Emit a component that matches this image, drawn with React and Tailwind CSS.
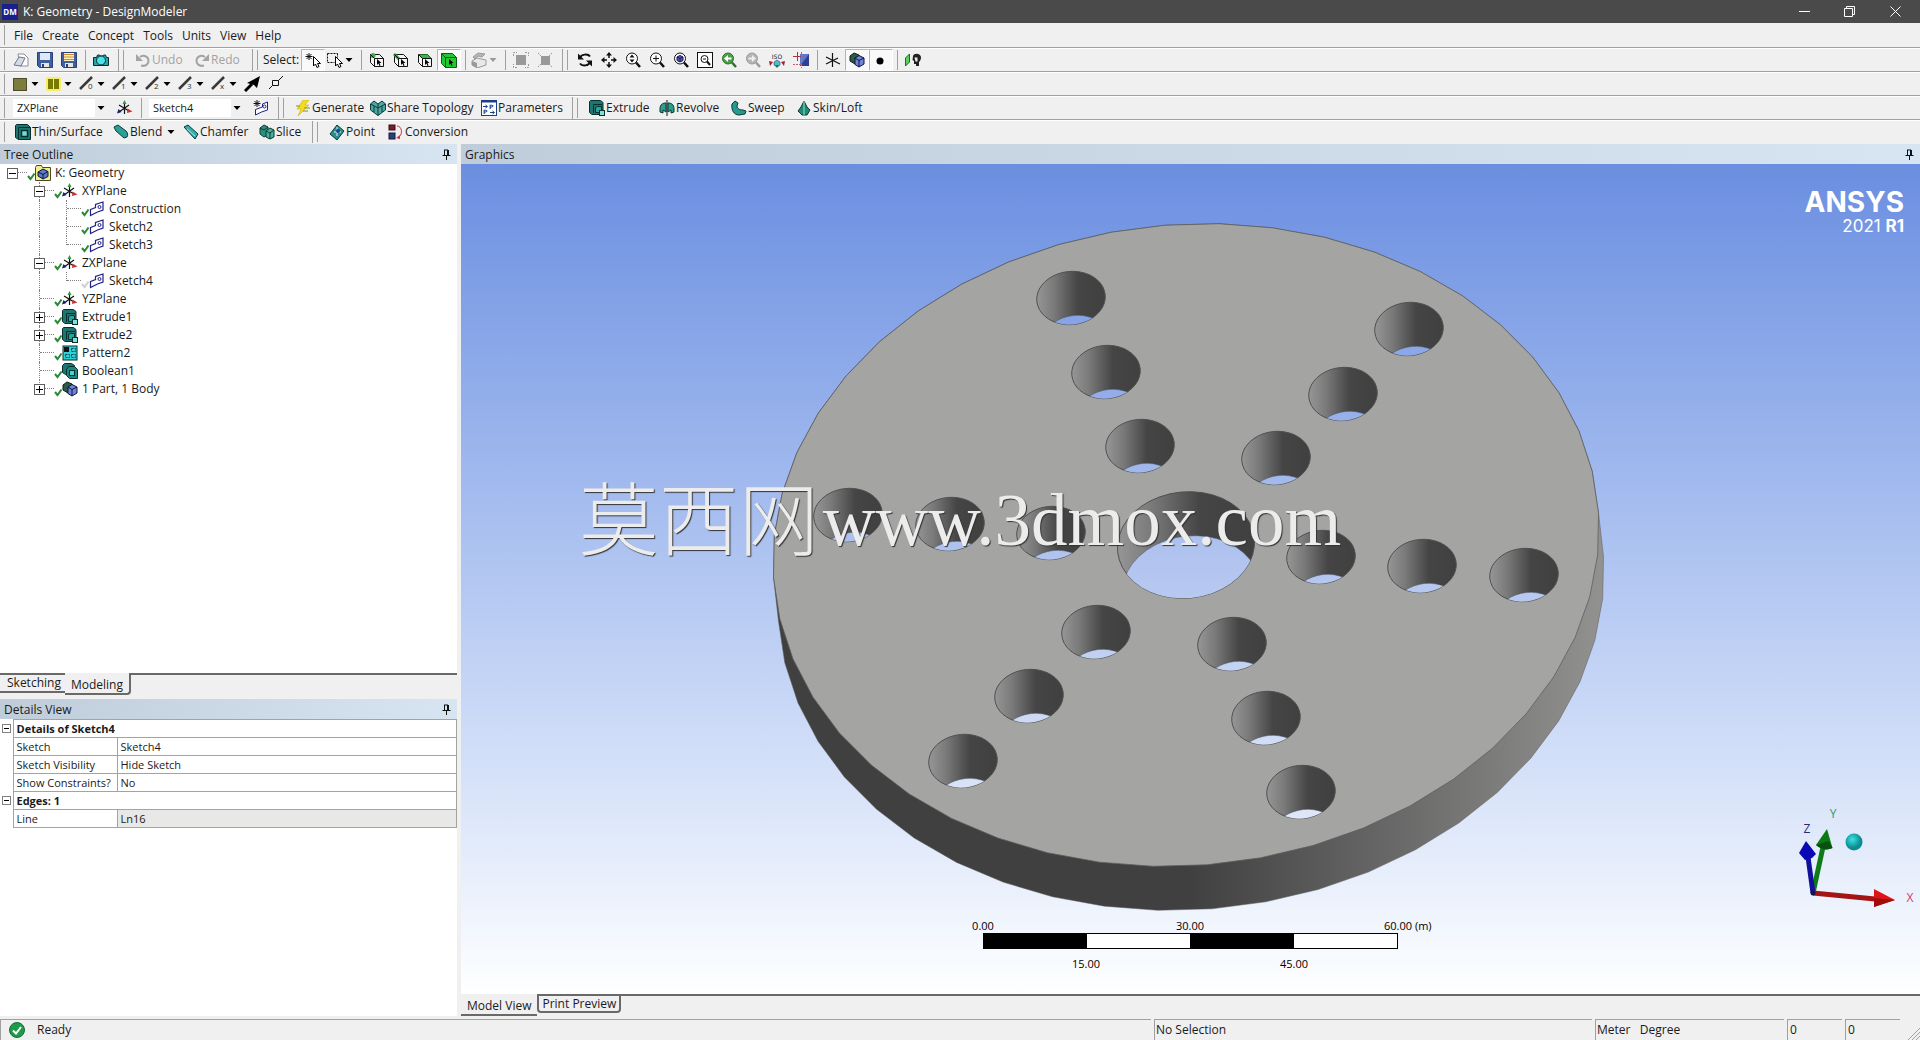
import React, { useState } from "react";

/* ---------- icons ---------- */

const Svg = ({ children, w = 16, h = 16, className = "" }) => (
  <svg
    width={w}
    height={h}
    viewBox={`0 0 ${w} ${h}`}
    className={`shrink-0 ${className}`}
    fill="none"
    stroke="none"
    aria-hidden="true"
  >
    {children}
  </svg>
);

const Caret = ({ color = "#000" }) => (
  <Svg w={8} h={8}>
    <path d="M0.5 2h7L4 6z" fill={color} />
  </Svg>
);

const Cursor = () => (
  <path d="M8.500 4.500v9.500l2-2 1.500 3.500 2-1-1.500-3h3z" fill="#fff" stroke="#000" />
);

const Cube = ({ children }) => (
  <>
    <path d="M1.500 2.500h9l4 4v8h-9l-4-4z" fill="#f4f4f4" stroke="#111" />
    {children}
    <path d="M1.500 2.500l4 4h9M5.500 6.500v8" stroke="#111" />
    <path d="M8 7v6l1.500-1.500 1 2.500 1-.5-1-2.500h2z" fill="#000" />
  </>
);

const Lens = ({ color = "#111", fill = "#fff", children }) => (
  <>
    <circle cx="7" cy="6.500" r="5.500" fill={fill} stroke={color} />
    <path d="M11 10.500l4 4.500" stroke={color} strokeWidth="2.500" />
    {children}
  </>
);

const Axes = () => (
  <>
    <path d="M7.500 3v11M2 5l10 6M2 12l10-7" stroke="#111" strokeWidth="1.200" />
    <path d="M5.500 4L7.500 0l2 4z" fill="#2e9a3e" />
    <path d="M10.500 8.500l5 3-5.500 1.500z" fill="#c83232" />
    <path d="M0 13.500l1.500-4.500 3 3z" fill="#15157a" />
  </>
);

const SketchShape = () => (
  <>
    <path
      d="M1.500 8.500l5-2V3.500l7.500-2.500v8l-5.500 2-7 3.500z"
      fill="#fff"
      stroke="#20208c"
      strokeWidth="1.200"
    />
    <circle cx="10.500" cy="6" r="1.500" stroke="#20208c" />
  </>
);

const Body = () => (
  <>
    <path d="M1 4l4-3 5 2v6l-4 3-5-3z" fill="#2d5a46" stroke="#0c1c18" />
    <path d="M6 6l4-2.500L15 6v6l-5 3-4-2.500z" fill="#6f86d8" stroke="#0d1440" />
    <path d="M6 6l4 2.500L15 6M10 8.500V15" stroke="#0d1440" />
  </>
);

const ExtrudeShape = () => (
  <>
    <path d="M.5 1.500l1-1h10l2.500 2v12h-11l-2.500-2z" fill="#1c7571" stroke="#06302e" />
    <path d="M4.500 13V4.500H13" stroke="#06302e" />
    <path d="M6.500 7.500l2-1h4v6h-6z" fill="#27a39c" stroke="#06302e" />
    <rect x="10.500" y="10.500" width="5" height="5" fill="#7fe0da" stroke="#06302e" />
  </>
);

const icons = {
  open: (
    <>
      <path d="M5 2h6l4 4v8H7z" fill="#fff" stroke="#8a8f9a" />
      <path d="M1 13l5-8 6 1-4 8z" fill="#d3dae8" stroke="#6d7686" />
    </>
  ),
  save: (
    <>
      <path d="M.5.5h15v15h-13l-2-2z" fill="#3f5f9f" stroke="#2a3f73" />
      <rect x="3" y="1" width="10" height="7" fill="#dfe8f6" />
      <rect x="4" y="11" width="8" height="4" fill="#e6e6e6" />
      <rect x="5" y="12" width="2" height="3" fill="#2a3f73" />
    </>
  ),
  saveAs: (
    <>
      <path d="M.5.5h15v15h-13l-2-2z" fill="#3f5f9f" stroke="#2a3f73" />
      <rect x="3" y="1" width="10" height="8" fill="#fff0c0" />
      <path d="M3 2.500h10M3 5h10M3 7.500h10" stroke="#d08a2a" />
      <rect x="4" y="11" width="8" height="4" fill="#e6e6e6" />
      <rect x="5" y="12" width="2" height="3" fill="#2a3f73" />
    </>
  ),
  camera: (
    <>
      <path d="M.5 5.500h3l1-2.500h2l1 1h2l1-1h2l1 2.500h2v8h-15z" fill="#2aa3a8" stroke="#0c2a2c" />
      <circle cx="8" cy="8.500" r="4.500" fill="#49e3ea" stroke="#0c2a2c" />
    </>
  ),
  undo: (
    <>
      <path d="M6 13.500c5 1.500 8-2 7.500-5.500S9 2.500 5 5" stroke="#a3a3a3" strokeWidth="2" />
      <path d="M1 2v7h7z" fill="#a3a3a3" />
    </>
  ),
  redo: (
    <>
      <path d="M10 13.500c-5 1.500-8-2-7.500-5.500S7 2.500 11 5" stroke="#a3a3a3" strokeWidth="2" />
      <path d="M15 2v7H8z" fill="#a3a3a3" />
    </>
  ),
  pick: (
    <>
      <path d="M4 1v7M.5 4.500h7M1.500 2l5 5M6.500 2l-5 5" stroke="#111" />
      <Cursor />
    </>
  ),
  boxPick: (
    <>
      <path d="M.5 1.500h10M.5 1.500v9h7M10.500 1.500v4" stroke="#111" strokeDasharray="2 1" />
      <Cursor />
    </>
  ),
  point: (
    <Cube>
      <circle cx="4" cy="3.500" r="2.500" fill="#3fae4a" />
    </Cube>
  ),
  edge: (
    <Cube>
      <path d="M1 2l5 5" stroke="#2f9a3a" strokeWidth="3" />
    </Cube>
  ),
  face: (
    <Cube>
      <path d="M1.500 2.500h9l4 4h-9z" fill="#35b845" />
    </Cube>
  ),
  body: (
    <>
      <path d="M.5 1.500h11l4 4v10h-11l-4-4z" fill="#22c832" stroke="#0c5a14" />
      <path d="M.5 1.500l4 4h11M4.500 5.500v10" stroke="#0c5a14" />
      <path d="M8 7v6l1.500-1.500 1 2.500 1-.5-1-2.500h2z" fill="#000" />
    </>
  ),
  extend: (
    <>
      <path d="M1 9l5-3 9 2v5l-9 3-5-3z" fill="#e8e8e8" stroke="#999" />
      <path d="M1 9l5 2v5l-5-3z" fill="#999" />
      <path d="M2 5l5-4 7 1-3 3-4-1-3 3z" fill="#b5b5b5" stroke="#999" />
    </>
  ),
  expand: (
    <>
      <rect x="3" y="3" width="10" height="10" fill="#999" />
      <path d="M.5 4V.5H4M12 .5h3.500V4M15.500 12v3.500H12M4 15.500H.5V12" stroke="#999" strokeDasharray="2 1" />
    </>
  ),
  shrink: (
    <>
      <rect x="4" y="4" width="9" height="9" fill="#999" />
      <path d="M1 1l3 3M15 1l-3 3M15 15l-3-3M1 15l3-3" stroke="#999" strokeDasharray="2 1" />
    </>
  ),
  rotate: (
    <>
      <path d="M3 6c1-4 8-4.500 10-1.500M13 10c-1 4-8 4.500-10 1.500" stroke="#111" strokeWidth="2" />
      <path d="M1 1.500v6h6zM15 14.500v-6H9z" fill="#111" />
    </>
  ),
  pan: (
    <>
      <path d="M8 2v4M8 10v4M2 8h4M10 8h4" stroke="#111" strokeWidth="1.500" />
      <path d="M8 0l3 3.500H5zM8 16l3-3.500H5zM0 8l3.500-3v6zM16 8l-3.500-3v6z" fill="#111" />
    </>
  ),
  zoom: (
    <Lens>
      <path d="M7 2.500l2.500 3h-5zM7 10.500l2.500-3h-5z" fill="#111" />
    </Lens>
  ),
  zoomIn: (
    <Lens>
      <path d="M7 3.500v6M4 6.500h6" stroke="#111" />
    </Lens>
  ),
  zoomFit: (
    <Lens>
      <path d="M4 5l3-1.500L10 5v3.500L7 10 4 8.500z" fill="#5a5ab0" stroke="#16165e" />
      <path d="M4 5l3 1.500L10 5M7 6.500V10" stroke="#16165e" />
    </Lens>
  ),
  zoomBox: (
    <>
      <rect x=".5" y=".5" width="15" height="15" fill="#fff" stroke="#111" />
      <circle cx="7.500" cy="7" r="3.500" stroke="#111" />
      <path d="M10 9.500l3 3.500" stroke="#111" strokeWidth="2" />
      <path d="M6 7h3" stroke="#111" />
    </>
  ),
  zoomPrev: (
    <Lens color="#2f6f2f" fill="#4c9e48">
      <path d="M3 6.500l4-3.500v2.500h3.500v2H7V10z" fill="#fff" />
    </Lens>
  ),
  zoomNext: (
    <Lens color="#9a9a9a" fill="#b5b5b5">
      <path d="M11 6.500L7 3v2.500H3.500v2H7V10z" fill="#eee" />
    </Lens>
  ),
  iso: (
    <>
      <text x="8" y="7" textAnchor="middle" fontSize="6" fontFamily="DejaVu Sans" fill="#111">
        ISO
      </text>
      <path d="M5 10l3-2 3 2v3l-3 2-3-2z" fill="#49c0c8" stroke="#126" strokeWidth=".5" />
      <path d="M0 9l4 1-3 4zM12 10l4-1-1 5z" fill="#a02030" />
      <path d="M6 13h4l-2 3z" fill="#1d7a2d" />
    </>
  ),
  displayPlane: (
    <>
      <rect x="7" y="2" width="9" height="12" fill="#5f78c8" />
      <path d="M7 14l9-12v12z" fill="#2f3f98" />
      <path d="M4.500 0v9M0 4.500h9" stroke="#b03040" />
      <path d="M8.500 0v16M0 12.500h8" stroke="#c86070" strokeDasharray="2 1" />
    </>
  ),
  axes: <path d="M7.500 1v14M1 5l14 7M1 12l12-6" stroke="#111" strokeWidth="1.200" />,
  shaded: <Body />,
  dot: <circle cx="7" cy="9" r="3.500" fill="#000" />,
  lookAt: (
    <>
      <path d="M.5 6l4-4v8l-4 4z" fill="#5cd05c" stroke="#1d6a1d" />
      <path d="M8 4c1-3 7-3 8 1 0 3-1 4-2 5v4h-3v-2H9v-3L7.500 8z" fill="#222" />
      <path d="M9.500 5.500h3v4h-2z" fill="#eee" />
    </>
  ),
  olive: <rect x=".5" y="2.500" width="13" height="12" fill="#7c7c3c" stroke="#4c4c28" />,
  oliveHi: (
    <>
      <rect x="0" y="1" width="15" height="14" rx="2" fill="#f3ee6a" />
      <path d="M2 3h5v10H2zM8 3h5v10H8z" fill="#7a7a00" />
    </>
  ),
  arrow: (
    <>
      <path d="M1 15l7-7" stroke="#000" strokeWidth="3" />
      <path d="M16 0l-3 12-3-3-7-2z" fill="#000" />
    </>
  ),
  pointLine: (
    <>
      <path d="M4.500 4.500h6v5h-6z" stroke="#111" />
      <path d="M10.500 4.500L15 0M4.500 9.500L1 13" stroke="#111" />
    </>
  ),
  plane: <Axes />,
  newSketch: (
    <>
      <path d="M2.500 9.500v5.500l6-3 6-2V2l-5 2v3z" fill="#fff" stroke="#20208c" />
      <path d="M4 0v7M.5 3.500h7M1.500 1l5 5M6.500 1l-5 5" stroke="#111" />
      <circle cx="11.500" cy="6.500" r="1.500" stroke="#20208c" />
    </>
  ),
  generate: (
    <>
      <path d="M8 0h6l-4 5h4L3 16l3-7H2z" fill="#f2dc22" stroke="#c2a800" strokeWidth=".5" />
      <path d="M9 8h6M8 11h5M1 6h4" stroke="#8a8a20" />
    </>
  ),
  share: (
    <>
      <path d="M.5 4l3.500-3 4 3 4-3 3.500 3v6L8 15.500.5 10z" fill="#4da8a4" stroke="#0b3a38" />
      <path d="M.5 4L8 8l7.500-4M8 4v11.500M4 6v6M12 6v6" stroke="#0b3a38" />
    </>
  ),
  params: (
    <>
      <rect x=".5" y=".5" width="15" height="15" fill="#fff" stroke="#1c3f86" />
      <path d="M0 1.500h16" stroke="#1c3f86" strokeWidth="2" />
      <text x="8" y="9" fontSize="6" fontWeight="bold" fontFamily="DejaVu Sans" fill="#1c3f86">
        P
      </text>
      <text x="2" y="14" fontSize="6" fontWeight="bold" fontFamily="DejaVu Sans" fill="#1c3f86">
        P
      </text>
      <path d="M2 6.500h4M4.500 5l2 1.500-2 1.500M9 12.500h4M11.500 11l2 1.500-2 1.500" stroke="#1c3f86" />
    </>
  ),
  extrude: <ExtrudeShape />,
  revolve: (
    <>
      <path d="M1 9c0-5 3-6 6-6v9l-3-2v3l-3-1zM15 9c0-5-3-6-6-6v9l3-2v3l3-1z" fill="#27a08f" stroke="#0b3a30" />
      <path d="M8 0v16" stroke="#111" />
    </>
  ),
  sweep: (
    <path d="M1 4l3-3 3 2-1 3c0 3 3 4 6 4l3 1-1 3-6 1C3 15 0 10 1 4z" fill="#27998f" stroke="#0b3a36" />
  ),
  loft: (
    <>
      <path d="M8 1l3 6 3 3-3 5H6l-4-4 3-4z" fill="#1f8a74" stroke="#0b3a30" />
      <path d="M8 1v14" stroke="#8fe0c8" />
    </>
  ),
  thin: (
    <>
      <path d="M.5 1.500l1-1h11l3 3v12h-12l-3-2z" fill="#1c7571" stroke="#06302e" />
      <path d="M3.500 15.500v-12h12" stroke="#06302e" />
      <rect x="6.500" y="6.500" width="6" height="6" fill="#7fd6d2" stroke="#06302e" strokeWidth="1.500" />
    </>
  ),
  blend: (
    <path d="M1 3l4-2 8 6c2 2 2 4 1 6l-3 1-8-7z" fill="#2a9f98" stroke="#0b3a38" />
  ),
  chamfer: (
    <>
      <path d="M1 3l4-2 10 9-3 5z" fill="#35aea6" stroke="#0b3a38" />
      <path d="M4 5l8 7" stroke="#bdf" />
    </>
  ),
  slice: (
    <>
      <path d="M1 4l4-3 4 2v8l-4 2-4-3z" fill="#2a8f80" stroke="#0b3a30" />
      <path d="M7 7l4-3 4 2v7l-4 2-4-2z" fill="#45b09e" stroke="#0b3a30" />
      <path d="M7 7l4 2 4-3M11 9v6M1 4l4 2 4-3" stroke="#0b3a30" />
    </>
  ),
  pointF: (
    <>
      <path d="M1 10L8 1l7 6-7 9z" fill="#2a8f8a" stroke="#0b3a38" />
      <path d="M8 3v9M5 8h7" stroke="#d8f5f5" />
      <circle cx="9" cy="7" r="2" fill="#163fa0" />
    </>
  ),
  conversion: (
    <>
      <rect x="1" y="1" width="6" height="5" fill="#7a1c2c" stroke="#3a0c14" />
      <rect x="1" y="9" width="6" height="6" fill="#2a3f7c" stroke="#101c44" />
      <path d="M9 2c5 0 6 8 2 11" stroke="#d03040" />
      <path d="M8 14l4-3v4z" fill="#d03040" />
    </>
  ),
  root: (
    <>
      <path d="M.5 2.500l1-2h5l1 2h8v13H.5z" fill="#f4ef8a" stroke="#4a4a20" />
      <path d="M3 7l5-3 5 2.500v5L8 14 3 11z" fill="#5f78c8" stroke="#0d1440" />
      <path d="M3 7l5 2.500 5-3M8 9.500V14" stroke="#0d1440" />
    </>
  ),
  sketch: <SketchShape />,
  pattern: (
    <>
      <rect x="1" y="1" width="14" height="14" fill="#2fd0d6" stroke="#06302e" />
      <rect x="2" y="2" width="5" height="5" fill="#111" />
      <path d="M9.500 3.500h4v3h-4zM9.500 9.500h4v3h-4zM3.500 9.500h4v3h-4z" stroke="#0a4a4e" strokeDasharray="2 1" />
    </>
  ),
  boolean: (
    <>
      <path d="M.5 2.500l2-2h7l3 2v9h-9l-3-2z" fill="#1c7571" stroke="#06302e" />
      <path d="M4.500 6.500l2-3h6l3 3v9h-8l-3-3z" fill="#1c8581" stroke="#06302e" />
      <rect x="7.500" y="7.500" width="5" height="5" fill="#3fd8d0" stroke="#06302e" />
    </>
  ),
};

const Icon = ({ name }) => <Svg>{icons[name]}</Svg>;

/* edge colour icons: a slanted stroke plus its connection count */
const LineIcon = ({ label }) => (
  <Svg>
    <path d="M1 13L13 1" stroke="#3a3a3a" strokeWidth="2.500" />
    <text x="9" y="13" fontSize="8" fontFamily="Open Sans" fill="#333">
      {label}
    </text>
  </Svg>
);

const Pin = () => (
  <Svg w={9} h={11}>
    <path d="M2.500 1v5M2 1h4M5.500 1v5M6.500 1v5M0.500 6.500h8M4.500 7v4" stroke="#111" />
  </Svg>
);

/* ---------- toolbar parts ---------- */

const Line = () => <span className="h-5 w-px bg-[#a0a0a0]" />;

const Grip = () => (
  <span className="flex h-full w-[9px] shrink-0 items-center pl-1">
    <Line />
  </span>
);

const Sep = () => (
  <span className="flex h-full w-2 shrink-0 items-center justify-center">
    <Line />
  </span>
);

const GroupEnd = () => (
  <span className="flex h-full w-4 shrink-0 items-center justify-center gap-1">
    <span className="h-full w-px bg-[#a0a0a0]" />
    <Line />
  </span>
);

const Tool = ({ name, label, pressed }) => (
  <button
    type="button"
    aria-label={label}
    aria-pressed={pressed}
    className={`flex h-[22px] w-6 shrink-0 items-center justify-center ${
      pressed ? "border border-[#b4b4b4] border-r-white border-b-white bg-[#f9f9f9]" : ""
    }`}
  >
    <Icon name={name} />
  </button>
);

const DropTool = ({ label, children, disabled, className = "w-8 pl-0.5" }) => (
  <button
    type="button"
    aria-label={label}
    disabled={disabled}
    className={`flex h-full shrink-0 items-center gap-0.5 ${className}`}
  >
    {children}
    <Caret color={disabled ? "#999" : "#000"} />
  </button>
);

const TextTool = ({ name, label, width, disabled, caret }) => (
  <button
    type="button"
    disabled={disabled}
    className={`flex h-full shrink-0 items-center gap-px pl-1.5 whitespace-nowrap disabled:text-[#a3a3a3] ${width}`}
  >
    <Icon name={name} />
    {label}
    {caret && (
      <span className="pl-1">
        <Caret />
      </span>
    )}
  </button>
);

const Picker = ({ label, options, className }) => (
  <label className={`flex items-center gap-0.5 ${className}`}>
    <span className="sr-only">{label}</span>
    <select className="h-[18px] w-[82px] appearance-none bg-white pl-1 text-[11px] leading-4 outline-none">
      {options.map((o) => (
        <option key={o}>{o}</option>
      ))}
    </select>
    <Caret />
  </label>
);

const Row = ({ children, last }) => (
  <div
    className={`flex h-6 items-center border-t border-b border-t-white ${
      last ? "border-b-[#f0f0f0]" : "border-b-[#a0a0a0]"
    }`}
  >
    {children}
  </div>
);

const Toolbars = () => (
  <div className="shrink-0">
    <Row>
      <Grip />
      <Tool name="open" label="Open" />
      <Tool name="save" label="Save" />
      <Tool name="saveAs" label="Save As" />
      <Sep />
      <Tool name="camera" label="Image Capture" />
      <GroupEnd />
      <TextTool name="undo" label="Undo" width="w-[59px]" disabled />
      <TextTool name="redo" label="Redo" width="w-[59px]" disabled />
      <GroupEnd />
      <span className="w-[38px]">Select:</span>
      <Tool name="pick" label="New Selection" pressed />
      <DropTool label="Select Mode">
        <Icon name="boxPick" />
      </DropTool>
      <Sep />
      <Tool name="point" label="Points" />
      <Tool name="edge" label="Edges" />
      <Tool name="face" label="Faces" />
      <Tool name="body" label="Bodies" pressed />
      <Sep />
      <DropTool label="Extend Selection" disabled>
        <Icon name="extend" />
      </DropTool>
      <Sep />
      <Tool name="expand" label="Expand Selection" />
      <Tool name="shrink" label="Shrink Selection" />
      <GroupEnd />
      <Tool name="rotate" label="Rotate" />
      <Tool name="pan" label="Pan" />
      <Tool name="zoom" label="Zoom" />
      <Tool name="zoomIn" label="Box Zoom" />
      <Tool name="zoomFit" label="Zoom to Fit" />
      <Tool name="zoomBox" label="Magnifier Window" />
      <Tool name="zoomPrev" label="Previous View" />
      <Tool name="zoomNext" label="Next View" />
      <Tool name="iso" label="ISO View" />
      <Tool name="displayPlane" label="Display Plane" />
      <Sep />
      <Tool name="axes" label="Display Axes" />
      <Tool name="shaded" label="Display Model" pressed />
      <Tool name="dot" label="Display Points" pressed />
      <Sep />
      <Tool name="lookAt" label="Look At" />
    </Row>

    <Row>
      <Grip />
      <DropTool label="Face Color" className="w-[33px] pl-1">
        <Icon name="olive" />
      </DropTool>
      <DropTool label="Edge Color" className="w-[33px] pl-1">
        <Icon name="oliveHi" />
      </DropTool>
      {["0", "1", "2", "3", "x"].map((n) => (
        <DropTool key={n} label={`Edge Style ${n}`} className="w-[33px] pl-1">
          <LineIcon label={n} />
        </DropTool>
      ))}
      <Tool name="arrow" label="Edge Direction" />
      <Tool name="pointLine" label="Display Vertices" />
    </Row>

    <Row>
      <Grip />
      <Picker label="Active plane" options={["ZXPlane", "XYPlane", "YZPlane"]} className="w-[104px] pl-1" />
      <Tool name="plane" label="New Plane" />
      <Sep />
      <Picker label="Active sketch" options={["Sketch4"]} className="w-[104px] pl-1" />
      <Tool name="newSketch" label="New Sketch" />
      <GroupEnd />
      <TextTool name="generate" label="Generate" width="w-[75px]" />
      <TextTool name="share" label="Share Topology" width="w-[111px]" />
      <TextTool name="params" label="Parameters" width="w-[92px]" />
      <GroupEnd />
      <TextTool name="extrude" label="Extrude" width="w-[70px]" />
      <TextTool name="revolve" label="Revolve" width="w-[72px]" />
      <TextTool name="sweep" label="Sweep" width="w-[65px]" />
      <TextTool name="loft" label="Skin/Loft" width="w-[72px]" />
    </Row>

    <Row last>
      <Grip />
      <TextTool name="thin" label="Thin/Surface" width="w-[98px]" />
      <TextTool name="blend" label="Blend" width="w-[70px]" caret />
      <TextTool name="chamfer" label="Chamfer" width="w-[76px]" />
      <TextTool name="slice" label="Slice" width="w-[54px]" />
      <GroupEnd />
      <TextTool name="pointF" label="Point" width="w-[59px]" />
      <TextTool name="conversion" label="Conversion" width="w-[92px]" />
    </Row>
  </div>
);

/* ---------- left side ---------- */

const PanelHeader = ({ title }) => (
  <div className="flex h-5 shrink-0 items-center justify-between bg-linear-to-r from-[#bfcddb] to-[#d7e4f2] pr-1.5 pl-1">
    <h2 className="pt-px">{title}</h2>
    <button type="button" aria-label={`Pin ${title}`}>
      <Pin />
    </button>
  </div>
);

// guides: one entry per column left of the node, true where a connector passes through
const tree = [
  { label: "K: Geometry", icon: "root", box: "-", guides: [] },
  { label: "XYPlane", icon: "plane", box: "-", guides: [false] },
  { label: "Construction", icon: "sketch", guides: [false, true] },
  { label: "Sketch2", icon: "sketch", guides: [false, true] },
  { label: "Sketch3", icon: "sketch", guides: [false, true], end: true },
  { label: "ZXPlane", icon: "plane", box: "-", guides: [false] },
  { label: "Sketch4", icon: "sketch", guides: [false, true], end: true, hidden: true },
  { label: "YZPlane", icon: "plane", guides: [false] },
  { label: "Extrude1", icon: "extrude", box: "+", guides: [false] },
  { label: "Extrude2", icon: "extrude", box: "+", guides: [false] },
  { label: "Pattern2", icon: "pattern", guides: [false] },
  { label: "Boolean1", icon: "boolean", guides: [false] },
  { label: "1 Part, 1 Body", icon: "shaded", box: "+", guides: [false], end: true },
];

const TreeRow = ({ label, icon, box, guides, end, hidden }) => (
  <li role="treeitem" aria-level={guides.length + 1} className="flex h-[18px] items-center">
    {guides.map((on, i) => (
      <span key={i} className="h-full w-[27px] shrink-0">
        {on && <span className="block h-full w-[13px] border-r border-dotted border-[#808080]" />}
      </span>
    ))}
    <span className="relative flex h-full w-[27px] shrink-0">
      <span
        className={`w-[13px] border-dotted border-[#808080] ${
          guides.length ? "border-r" : ""
        } ${end ? "h-1/2" : "h-full"}`}
      />
      <span className="h-1/2 flex-1 border-b border-dotted border-[#808080]" />
      {box && (
        <button
          type="button"
          aria-label={`Toggle ${label}`}
          className="absolute top-1 left-[7px] size-[11px] border border-[#606060] bg-white"
        >
          <Svg w={9} h={9}>
            <path d={box === "+" ? "M1 4.500h7M4.500 1v7" : "M1 4.500h7"} stroke="#000" />
          </Svg>
        </button>
      )}
    </span>
    <Svg w={8} h={16}>
      <path d="M1 11l2.500 3L7.500 8.500" stroke={hidden ? "#d0d0d0" : "#2b8a35"} strokeWidth="2" />
    </Svg>
    <Icon name={icon} />
    <span className="pl-1">{label}</span>
  </li>
);

const details = [
  { group: "Details of Sketch4" },
  { name: "Sketch", value: "Sketch4" },
  { name: "Sketch Visibility", value: "Hide Sketch" },
  { name: "Show Constraints?", value: "No" },
  { group: "Edges: 1" },
  { name: "Line", value: "Ln16", readOnly: true },
];

const DetailsTable = () => (
  <table className="w-full table-fixed border-collapse text-left text-[11px]">
    <colgroup>
      <col className="w-[13px]" />
      <col className="w-[104px]" />
      <col />
    </colgroup>
    <tbody>
      {details.map((d) => (
        <tr key={d.group || d.name} className="h-[18px]">
          <td className="p-0">
            {d.group && (
              <button
                type="button"
                aria-label={`Collapse ${d.group}`}
                className="ml-0.5 block size-[9px] border border-[#808080] bg-white"
              >
                <Svg w={7} h={7}>
                  <path d="M1 3.500h5" stroke="#000" />
                </Svg>
              </button>
            )}
          </td>
          {d.group ? (
            <th colSpan={2} className="border border-[#a0a5a0] px-[3px] py-0 leading-4 font-bold">
              {d.group}
            </th>
          ) : (
            <>
              <th className="border border-[#a0a5a0] px-[3px] py-0 leading-4 font-normal whitespace-nowrap">
                {d.name}
              </th>
              <td
                className={`border border-[#a0a5a0] px-[3px] py-0 leading-4 ${
                  d.readOnly ? "bg-[#e8e8e6]" : ""
                }`}
              >
                {d.value}
              </td>
            </>
          )}
        </tr>
      ))}
    </tbody>
  </table>
);

const LeftSide = () => {
  const [mode, setMode] = useState("Modeling");
  return (
    <aside className="flex w-[457px] shrink-0 flex-col">
      <PanelHeader title="Tree Outline" />
      <ul role="tree" className="min-h-0 flex-1 bg-white">
        {tree.map((node) => (
          <TreeRow key={node.label} {...node} />
        ))}
      </ul>
      <div role="tablist" className="flex h-[26px] shrink-0 items-start">
        {["Sketching", "Modeling"].map((t) => (
          <button
            key={t}
            type="button"
            role="tab"
            aria-selected={mode === t}
            onClick={() => setMode(t)}
            className={
              mode === t
                ? "h-[22px] rounded-br-sm border-r-2 border-b-2 border-[#696969] px-1.5 pt-1"
                : "h-5 border-t-2 border-b-2 border-[#696969] pr-1 pl-[7px]"
            }
          >
            {t}
          </button>
        ))}
        <span className="h-0.5 flex-1 bg-[#696969]" />
      </div>
      <PanelHeader title="Details View" />
      <div className="h-[297px] shrink-0 bg-white">
        <DetailsTable />
      </div>
    </aside>
  );
};

/* ---------- model ---------- */

const CX = 1186;
const CY = 545;
const THICK = [5, 44];
const SIDES = 48;
const PHASE = 0.08;

// maps a point of the unit circle onto the tilted face
const project = (t, s = 1) => [413 * s * Math.cos(t), s * (321 * Math.sin(t) - 16 * Math.cos(t))];

const angle = (i, n) => (i * 2 * Math.PI) / n + PHASE;

const ring = (cx, cy, s, n = SIDES) =>
  Array.from({ length: n }, (_, i) => {
    const [x, y] = project(angle(i, n), s);
    return [cx + x, cy + y];
  });

const toPath = (pts) => "M" + pts.map((p) => `${p[0].toFixed(1)} ${p[1].toFixed(1)}`).join("L") + "Z";

const silhouette = () => {
  const out = [];
  const isFront = (i) => {
    const t = angle(i, SIDES);
    return 0.012 * Math.cos(t) + 0.137 * Math.sin(t) > 0;
  };
  ring(CX, CY, 1).forEach((p, i) => {
    const low = [p[0] + THICK[0], p[1] + THICK[1]];
    const front = isFront(i);
    const before = isFront((i + SIDES - 1) % SIDES);
    if (front && !before) out.push(p, low);
    else if (!front && before) out.push(low, p);
    else out.push(front ? low : p);
  });
  return out;
};

const arms = [
  [-46, -99], [-80, -173], [-115, -247],
  [90, -87], [157, -151], [223, -216],
  [135, 12], [236, 21], [338, 30],
];

const holes = [
  { x: CX, y: CY, s: 0.166 },
  ...arms.flatMap(([x, y]) => [
    { x: CX + x, y: CY + y, s: 0.083 },
    { x: CX - x, y: CY - y, s: 0.083 },
  ]),
];

const Hole = ({ x, y, s, id }) => {
  const rim = toPath(ring(x, y, s, 40));
  return (
    <g>
      <clipPath id={id}>
        <path d={rim} />
      </clipPath>
      <path d={rim} fill="url(#bore)" stroke="#505050" strokeWidth="1" />
      <path
        d={toPath(ring(x + THICK[0], y + THICK[1], s, 40))}
        fill="url(#sky)"
        stroke="#505868"
        strokeWidth=".5"
        clipPath={`url(#${id})`}
      />
    </g>
  );
};

const Triad = () => (
  <g fontSize="12" textAnchor="middle">
    <path d="M1813 893L1823 847" stroke="#117a18" strokeWidth="5" />
    <path d="M1827 829l5.500 19q-8 4-16.500-3z" fill="#0b7a14" />
    <path d="M1816 845q8 7 16.500 3l-4-7z" fill="#075010" />
    <path d="M1813 893L1808 857" stroke="#10109a" strokeWidth="5" />
    <path d="M1806 841l10 13-4 4-7 2-6-7z" fill="#0808b4" />
    <path d="M1813 893L1875 899" stroke="#a51414" strokeWidth="5" />
    <path d="M1874 889l21 11-21 7z" fill="#e01414" />
    <path d="M1874 898l21 2-21 7z" fill="#a00c0c" />
    <circle cx="1813" cy="893" r="2.500" fill="#15154a" />
    <circle cx="1854" cy="842" r="8.500" fill="url(#ball)" />
    <text x="1833" y="818" fill="#2f9a60">Y</text>
    <text x="1807" y="833" fill="#2a2a70">Z</text>
    <text x="1910" y="902" fill="#d04060">X</text>
  </g>
);

const ScaleBar = () => (
  <g fontSize="11" textAnchor="middle" fill="#000">
    <rect x="983.500" y="933.500" width="414" height="15" fill="#fff" stroke="#000" />
    <rect x="983" y="933" width="104" height="16" />
    <rect x="1190" y="933" width="104" height="16" />
    <text x="983" y="930">0.00</text>
    <text x="1190" y="930">30.00</text>
    <text x="1384" y="930" textAnchor="start">60.00 (m)</text>
    <text x="1086" y="968">15.00</text>
    <text x="1294" y="968">45.00</text>
  </g>
);

const Viewport = () => (
  <div className="relative min-h-0 flex-1 bg-linear-to-b from-[#6b8ee0] to-[#feffff]">
    <svg
      viewBox="461 164 1459 830"
      className="absolute inset-0 size-full"
      role="img"
      aria-label="Perforated disc model"
    >
      <defs>
        <linearGradient id="sky" gradientUnits="userSpaceOnUse" x1="0" y1="164" x2="0" y2="994">
          <stop offset="0" stopColor="#6b8ee0" />
          <stop offset="1" stopColor="#feffff" />
        </linearGradient>
        <linearGradient id="side" gradientUnits="userSpaceOnUse" x1="774" y1="0" x2="1605" y2="0">
          <stop offset="0" stopColor="#404040" />
          <stop offset=".5" stopColor="#404040" />
          <stop offset=".7" stopColor="#616161" />
          <stop offset="1" stopColor="#929290" />
        </linearGradient>
        <linearGradient id="bore">
          <stop offset="0" stopColor="#969696" />
          <stop offset=".25" stopColor="#7a7a7a" />
          <stop offset=".6" stopColor="#454545" />
          <stop offset="1" stopColor="#404040" />
        </linearGradient>
        <radialGradient id="ball" cx=".4" cy=".35">
          <stop offset="0" stopColor="#40e0e0" />
          <stop offset="1" stopColor="#0a8c90" />
        </radialGradient>
      </defs>
      <path d={toPath(silhouette())} fill="url(#side)" stroke="#5a5a5a" strokeWidth=".5" />
      <path d={toPath(ring(CX, CY, 1))} fill="#a4a4a3" stroke="#5e5e5e" strokeWidth=".8" />
      {holes.map((h, i) => (
        <Hole key={i} id={`hole${i}`} {...h} />
      ))}
      <ScaleBar />
      <Triad />
    </svg>
    <div className="absolute top-[22px] right-4 flex flex-col items-end font-['Inter'] text-white">
      <span className="text-[28px] leading-8 font-bold">ANSYS</span>
      <span className="text-[17px] leading-4">
        2021 <b>R1</b>
      </span>
    </div>
  </div>
);

const Graphics = () => {
  const [view, setView] = useState("Model View");
  return (
    <main className="flex min-w-0 flex-1 flex-col">
      <PanelHeader title="Graphics" />
      <Viewport />
      <div role="tablist" className="flex h-[22px] shrink-0 items-start">
        {["Model View", "Print Preview"].map((t) => (
          <button
            key={t}
            type="button"
            role="tab"
            aria-selected={view === t}
            onClick={() => setView(t)}
            className={
              view === t
                ? "h-[22px] border-b-2 border-[#696969] px-1.5 pt-1"
                : "h-[19px] rounded-b-sm border-2 border-[#696969] px-[3px] leading-4"
            }
          >
            {t}
          </button>
        ))}
        <span className="h-0.5 flex-1 bg-[#696969]" />
      </div>
    </main>
  );
};

/* ---------- frame ---------- */

const TitleBar = () => (
  <header className="flex h-[23px] shrink-0 items-center bg-[#4a4a4a] text-white">
    <span className="ml-0.5 flex size-4 items-center justify-center bg-[#1a1f8c] text-[8px] font-bold">
      DM
    </span>
    <h1 className="flex-1 pl-[5px]">K: Geometry - DesignModeler</h1>
    <button type="button" aria-label="Minimize" className="flex h-full w-[46px] items-center justify-center">
      <Svg w={11} h={11}>
        <path d="M0 5.500h11" stroke="#fff" />
      </Svg>
    </button>
    <button type="button" aria-label="Restore" className="flex h-full w-[45px] items-center justify-center">
      <Svg w={11} h={11}>
        <path d="M.5 2.500h8v8h-8zM2.500 2.500v-2h8v8h-2" stroke="#fff" />
      </Svg>
    </button>
    <button type="button" aria-label="Close" className="mr-0.5 flex h-full w-[46px] items-center justify-center">
      <Svg w={11} h={11}>
        <path d="M.5.5l10 10M10.500.5l-10 10" stroke="#fff" />
      </Svg>
    </button>
  </header>
);

const MenuBar = () => (
  <nav className="flex h-[25px] shrink-0 items-center border-b border-[#a0a0a0]">
    <Grip />
    <div className="flex gap-[9px] pl-[5px] pt-px">
      {["File", "Create", "Concept", "Tools", "Units", "View", "Help"].map((m) => (
        <button key={m} type="button">
          {m}
        </button>
      ))}
    </div>
  </nav>
);

const StatusCell = ({ children, className }) => (
  <span
    className={`flex h-full items-center border-t border-l border-[#a0a0a0] whitespace-pre ${className}`}
  >
    {children}
  </span>
);

const StatusBar = () => (
  <footer className="flex h-[21px] shrink-0 gap-[3px]">
    <StatusCell className="flex-1 gap-3 pl-2">
      <Svg>
        <circle cx="8" cy="8" r="7.500" fill="#1f9a4c" stroke="#127036" />
        <path d="M4 8.500l3 3 5-6.500" stroke="#fff" strokeWidth="2" />
      </Svg>
      Ready
    </StatusCell>
    <StatusCell className="w-[438px] pl-px">No Selection</StatusCell>
    <StatusCell className="w-[189px] pl-px">{"Meter   Degree"}</StatusCell>
    <StatusCell className="w-[55px] pl-0.5">0</StatusCell>
    <StatusCell className="w-[55px] pl-0.5">0</StatusCell>
    <span className="flex w-[17px] items-end justify-end">
      <Svg w={13} h={13}>
        <path d="M1 13L13 1M5 13l8-8M9 13l4-4" stroke="#a0a0a0" />
      </Svg>
    </span>
  </footer>
);

const App = () => (
  <div className="relative flex h-screen flex-col overflow-hidden bg-[#f0f0f0] font-['Open_Sans','Noto_Sans',sans-serif] text-[12px] leading-4 text-[#1a1a1a]">
    <TitleBar />
    <MenuBar />
    <Toolbars />
    <div className="mb-[3px] flex min-h-0 flex-1 gap-1">
      <LeftSide />
      <Graphics />
    </div>
    <StatusBar />

    <p className="pointer-events-none absolute inset-0 flex items-center justify-center gap-1 text-[73px] leading-none whitespace-nowrap text-[#ececec] text-shadow-[1px_1px_1px_#333333]">
      <span className="pb-3 font-['Noto_Sans_CJK_SC',sans-serif] text-[80px] font-light">莫西网</span>
      <span className="font-['Liberation_Serif',serif]">www.3dmox.com</span>
    </p>
  </div>
);

export default App;
